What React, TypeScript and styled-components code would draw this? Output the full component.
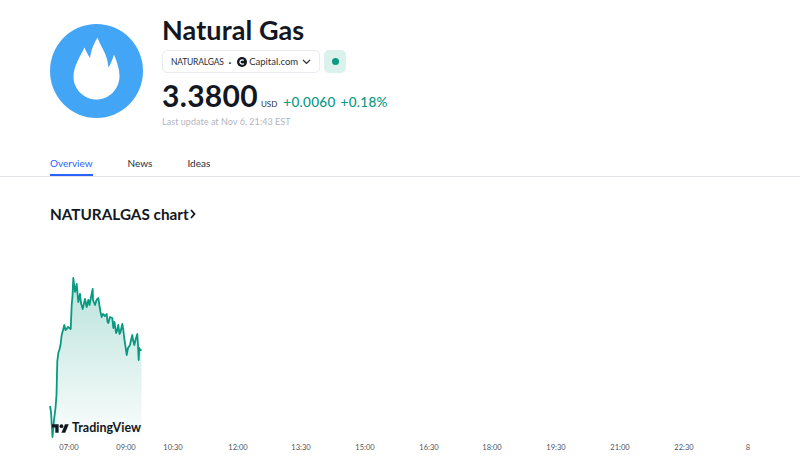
import React from 'react';
import styled, { createGlobalStyle } from 'styled-components';

const GlobalStyle = createGlobalStyle`
  html, body {
    margin: 0;
    padding: 0;
    background: #fff;
  }
  body {
    width: 800px;
    height: 465px;
    overflow: hidden;
    font-family: Lato, "Liberation Sans", sans-serif;
    color: #131722;
  }
`;

const Page = styled.div`
  width: 800px;
  height: 465px;
  display: flex;
  flex-direction: column;
`;

const Header = styled.header`
  display: flex;
  gap: 19px;
  padding: 15px 50px 0;
  height: 118px;
`;

const LogoCircle = styled.div`
  flex: none;
  width: 93px;
  height: 94px;
  margin-top: 9px;
  border-radius: 50%;
  background: #42a5f5;
`;

const Info = styled.div`
  display: flex;
  flex-direction: column;
`;

const Title = styled.h1`
  margin: 0;
  height: 35px;
  font-size: 27px;
  line-height: 30px;
  font-weight: 700;
  letter-spacing: 0.1px;
`;

const BadgeRow = styled.div`
  display: flex;
  gap: 4px;
`;

const SymbolPill = styled.div`
  box-sizing: border-box;
  width: 158px;
  height: 23px;
  display: flex;
  align-items: center;
  padding: 0 8px;
  border: 1px solid #e9ecf2;
  border-radius: 5px;
  font-size: 8.5px;
  letter-spacing: -0.2px;
  color: #2a2e39;
`;

const Dot = styled.span`
  margin: 0 6px 0 5px;
  font-size: 10px;
  font-weight: 700;
`;

const CapitalIcon = styled.svg`
  flex: none;
`;

const Exchange = styled.span`
  margin-left: 2px;
  font-size: 9.5px;
  letter-spacing: 0;
`;

const Chevron = styled.svg`
  flex: none;
  margin-left: auto;
  margin-right: 0;
`;

const StatusBox = styled.div`
  width: 22px;
  height: 23px;
  display: flex;
  align-items: center;
  justify-content: center;
  border-radius: 5px;
  background: #daf1ec;
`;

const StatusDot = styled.span`
  width: 7px;
  height: 7px;
  border-radius: 50%;
  background: #089981;
`;

const PriceRow = styled.div`
  display: flex;
  align-items: baseline;
  margin-top: 5px;
  height: 35px;
`;

const Price = styled.span`
  font-size: 30px;
  line-height: 35px;
  font-weight: 700;
  letter-spacing: 0.3px;
`;

const Currency = styled.span`
  margin: 0 6px 0 3px;
  font-size: 8px;
  color: #2a2e39;
`;

const Change = styled.span`
  font-size: 13.5px;
  font-weight: 500;
  color: #089981;
  letter-spacing: 0.3px;
  margin-right: 5px;
`;

const Updated = styled.div`
  margin-top: 2px;
  font-size: 9px;
  line-height: 13px;
  color: #b2b5be;
  letter-spacing: 0.05px;
`;

const Tabs = styled.nav`
  display: flex;
  gap: 35px;
  height: 43px;
  padding: 0 50px;
  border-bottom: 1px solid #e0e3eb;
`;

const Tab = styled.div<{ $active?: boolean }>`
  box-sizing: border-box;
  height: 43px;
  padding-top: 22px;
  font-size: 10px;
  line-height: 16px;
  color: ${props => (props.$active ? '#2962ff' : '#2a2e39')};
  border-bottom: 2px solid ${props => (props.$active ? '#2962ff' : 'transparent')};
`;

const ChartHeading = styled.h2`
  display: flex;
  align-items: center;
  gap: 1px;
  margin: 26px 50px 0;
  height: 22px;
  font-size: 15.3px;
  line-height: 22px;
  font-weight: 700;
`;

const ChartArea = styled.div`
  position: relative;
  flex: 1;
`;

const ChartSvg = styled.svg`
  display: block;
  width: 800px;
  height: 240px;
`;

const AxisLabel = styled.text`
  font-family: Lato, "Liberation Sans", sans-serif;
  font-size: 7.5px;
  fill: #50535e;
  text-anchor: middle;
`;

const Attribution = styled.div`
  position: absolute;
  left: 52px;
  bottom: 29px;
  display: flex;
  align-items: center;
  gap: 3px;
  font-family: Lato, "Liberation Sans", sans-serif;
  font-size: 12.5px;
  line-height: 16px;
  font-weight: 700;
  color: #131722;
`;

// chart coordinates are page pixels, minus the top of the chart area
const CHART_TOP = 225;
const points: [number, number][] = [
  [50, 406], [51, 412], [52.5, 437], [54, 420], [55.5, 408], [56.5, 395], [57.3, 361],
  [58.5, 352], [59.3, 350], [60.5, 345], [61.7, 335], [63, 330], [64.3, 325], [65.5, 330],
  [66.7, 329], [68, 327], [70.7, 329], [71.7, 305], [72.5, 296], [73.3, 278], [75, 292],
  [76.7, 284], [78.3, 302], [80, 294], [81, 303], [82.7, 309], [85, 299], [86.7, 307],
  [88.3, 300], [89.5, 305], [91, 297], [92.7, 289], [93, 300], [95, 305], [96.5, 300],
  [98.3, 298], [99.5, 306], [100.5, 312], [101.7, 317], [103, 314], [105, 316], [106.7, 314],
  [107.5, 322], [108.3, 323], [110, 317], [112.3, 318], [113.3, 328], [114.5, 322], [116, 333],
  [117, 331], [118.3, 325], [119.5, 334], [120.5, 332], [122.3, 324], [123.3, 330], [124.5, 340],
  [126, 350], [126.7, 355], [128, 348], [130, 345], [131, 340], [132.3, 335], [133, 340],
  [134.3, 345], [135.5, 340], [137.3, 334], [138, 345], [138.7, 360], [139.3, 348], [140, 350],
  [141.5, 350],
];

const linePath = points
  .map(([x, y], i) => `${i === 0 ? 'M' : 'L'}${x} ${y - CHART_TOP}`)
  .join(' ');
const areaPath = `${linePath} L141.5 ${437 - CHART_TOP} L50 ${437 - CHART_TOP} Z`;

const axisTicks: [string, number][] = [
  ['07:00', 69], ['09:00', 126], ['10:30', 173], ['12:00', 238], ['13:30', 301], ['15:00', 365],
  ['16:30', 429], ['18:00', 492], ['19:30', 556], ['21:00', 620], ['22:30', 684], ['8', 748],
];

const App: React.FC = () => (
  <Page>
    <GlobalStyle />
    <Header>
      <LogoCircle>
        <svg width="93" height="94" viewBox="0 0 93 94">
          <path
            fill="#fff"
            d="M47.5 13.5C50 22 57 28 58.5 43.5C60.5 40 62.5 36 64 30.5C67 38 69.5 45 69.5 52C69.5 65 59 75.5 46.5 75.5C34 75.5 23.5 65 23.5 53C23.5 42 30 33 34.5 23.5C36 27 38 31 40 34C41 26 44 19 47.5 13.5Z"
          />
        </svg>
      </LogoCircle>
      <Info>
        <Title>Natural Gas</Title>
        <BadgeRow>
          <SymbolPill>
            NATURALGAS
            <Dot>·</Dot>
            <CapitalIcon width="10" height="10" viewBox="0 0 11 11">
              <circle cx="5.5" cy="5.5" r="5.5" fill="#131722" />
              <path d="M7.4 3.9A2.4 2.4 0 1 0 7.4 7.1" fill="none" stroke="#fff" strokeWidth="1.4" />
            </CapitalIcon>
            <Exchange>Capital.com</Exchange>
            <Chevron width="9" height="6" viewBox="0 0 9 6">
              <path d="M1 1l3.5 3.5L8 1" fill="none" stroke="#2a2e39" strokeWidth="1.2" />
            </Chevron>
          </SymbolPill>
          <StatusBox>
            <StatusDot />
          </StatusBox>
        </BadgeRow>
        <PriceRow>
          <Price>3.3800</Price>
          <Currency>USD</Currency>
          <Change>+0.0060</Change>
          <Change>+0.18%</Change>
        </PriceRow>
        <Updated>Last update at Nov 6, 21:43 EST</Updated>
      </Info>
    </Header>
    <Tabs>
      <Tab $active>Overview</Tab>
      <Tab>News</Tab>
      <Tab>Ideas</Tab>
    </Tabs>
    <ChartHeading>
      NATURALGAS chart
      <svg width="6" height="10" viewBox="0 0 6 10">
        <path d="M1 1l3.5 4L1 9" fill="none" stroke="#131722" strokeWidth="1.8" />
      </svg>
    </ChartHeading>
    <ChartArea>
      <ChartSvg viewBox="0 0 800 240">
        <defs>
          <linearGradient id="areaFill" x1="0" y1="0" x2="0" y2="1">
            <stop offset="0" stopColor="#089981" stopOpacity="0.28" />
            <stop offset="1" stopColor="#089981" stopOpacity="0.02" />
          </linearGradient>
        </defs>
        <path d={areaPath} fill="url(#areaFill)" />
        <path d={linePath} fill="none" stroke="#089981" strokeWidth="1.8" strokeLinejoin="round" />
        {axisTicks.map(([label, x]) => (
          <AxisLabel key={label} x={x} y={225}>
            {label}
          </AxisLabel>
        ))}
      </ChartSvg>
      <Attribution>
        <svg width="17" height="9" viewBox="0 4 36 18">
          <path fill="#131722" d="M14 22H7V11H0V4h14v18zM28 22h-8l7.5-18h8L28 22z" />
          <circle cx="20" cy="8" r="4" fill="#131722" />
        </svg>
        TradingView
      </Attribution>
    </ChartArea>
  </Page>
);

export default App;
